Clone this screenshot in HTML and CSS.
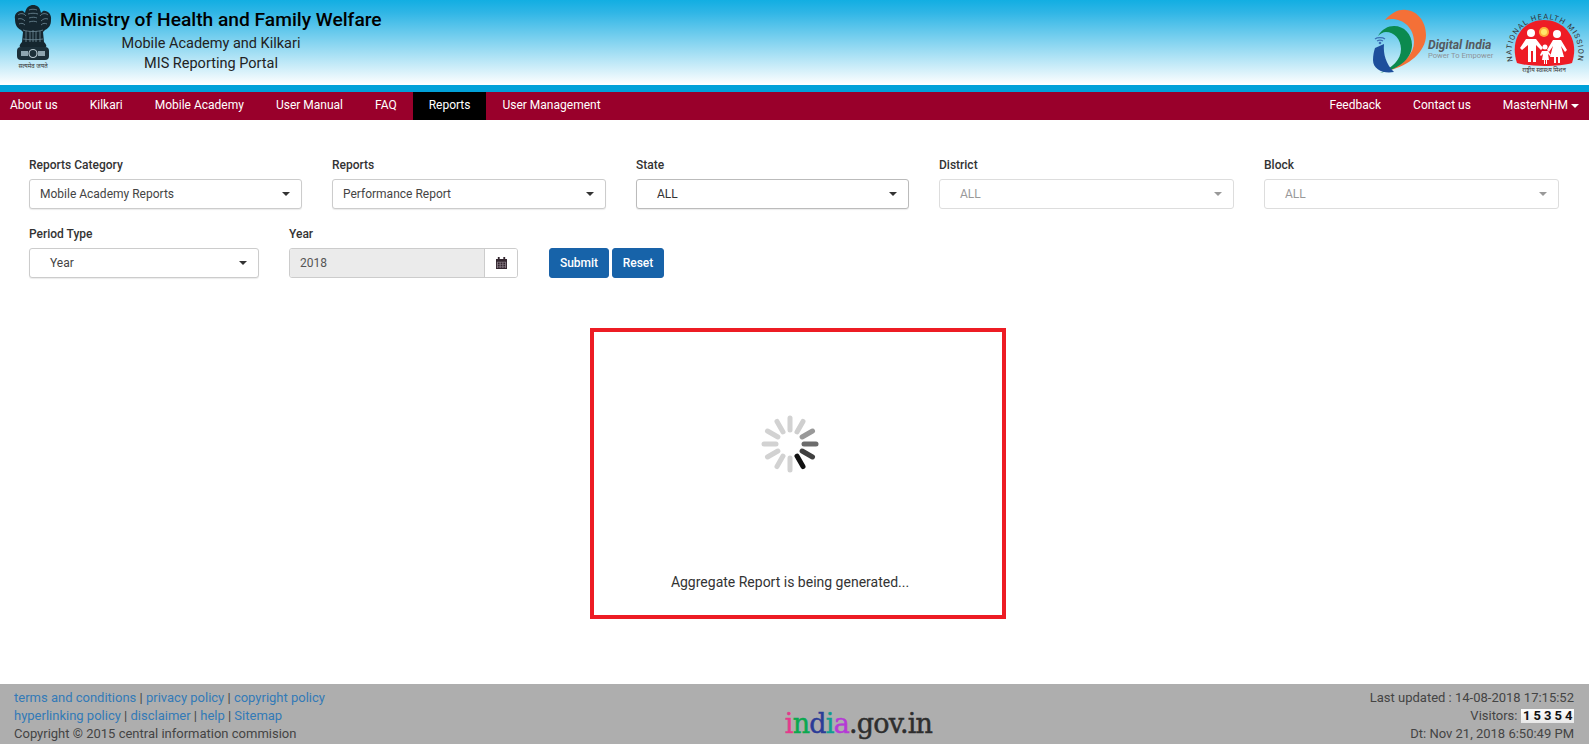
FILE: index.html
```html
<!DOCTYPE html>
<html lang="en">
<head>
<meta charset="utf-8">
<title>MIS Reporting Portal</title>
<link rel="stylesheet" href="styles.css">
</head>
<body>
<div class="page">
<header class="masthead">
  <div class="brand">
    <svg class="emblem" width="38" height="64" viewBox="0 0 38 64" aria-hidden="true">
      <path d="M1 14C0 9 4 5 9 6L11 8C12 2 16 0 19 0C23 0 26 2 27 8L29 6C33 5 38 9 37 15C37 20 35 23 31 25L29 27L30 37C32 39 33 41 32 42L6 42C5 41 6 39 8 37L9 27L7 25C3 23 1 20 1 14Z" fill="#15262f"/>
      <g fill="none" stroke="#6f8a98" stroke-width=".8">
        <path d="M4 10c2-2 6-2 8 1M4 14c3-1 5 0 7 2M5 19c2-1 4-1 6 1"/>
        <path d="M15 5c2-1 6-1 8 0M14 9c3-1 7-1 10 0M15 13c3-1 6-1 8 0M15 17c3-1 6-1 8 0"/>
        <path d="M26 11c2-3 6-3 8-1M27 16c2-2 4-3 7-2M27 20c2-2 4-2 6-1"/>
        <path d="M12 26v11M16 26v11M19 25v12M22 26v11M26 26v11"/>
        <path d="M9 25c6 2 14 2 20 0M9 34c6 1 14 1 20 0"/>
      </g>
      <rect x="3" y="42" width="32" height="13" rx="4" fill="#1c2f39"/>
      <circle cx="19" cy="48.500" r="4" fill="none" stroke="#b8c8d0" stroke-width="1.200"/>
      <path d="M7 46h7v5H7zM24 46h7v5h-7z" fill="#8ea4af"/>
      <text class="emblem-motto" x="19" y="63" text-anchor="middle">सत्यमेव जयते</text>
    </svg>
    <div class="brand-text">
      <h1 class="ministry">Ministry of Health and Family Welfare</h1>
      <p class="sub sub-one">Mobile Academy and Kilkari</p>
      <p class="sub sub-two">MIS Reporting Portal</p>
    </div>
  </div>
  <div class="logos">
    <div class="digital">
      <svg width="56" height="68" viewBox="0 0 56 68" aria-hidden="true">
        <path d="M13 12C20 4 28 1 34 2C46 3 54 14 54 27C54 44 36 58 18 62C32 55 42 46 42 34C42 18 28 8 13 12Z" fill="#f47037"/>
        <path d="M6 28C10 21 16 18 22 18C32 18 40 26 40 37C40 52 24 62 8 65C20 60 29 52 29 41C29 31 22 24 14 24C11 24 8 26 6 28Z" fill="#0b8a4f"/>
        <path d="M3 40L12 36C11 46 14 56 22 64C12 66 1 62 1 52C1 47 2 43 3 40Z" fill="#1d4f9c"/>
        <path d="M3 31a6 3 0 0 1 10 0M5 33a4 2 0 0 1 6 0" fill="none" stroke="#3b6fb5" stroke-width="1.200"/>
        <circle cx="8" cy="35" r="1.300" fill="#3b6fb5"/>
      </svg>
      <div class="digital-text">
        <span class="digital-name">Digital India</span>
        <span class="digital-tag">Power To Empower</span>
      </div>
    </div>
    <svg class="nhm" width="84" height="68" viewBox="0 0 84 68" aria-hidden="true">
      <defs><path id="arc" d="M8 53A33.400 33.400 0 1 1 72 53"/></defs>
      <text class="nhm-arc"><textPath href="#arc" startOffset="50%" text-anchor="middle">NATIONAL HEALTH MISSION</textPath></text>
      <path d="M12 54C4 30 18 11 39 11C60 11 75 30 67 54C55 58 24 58 12 54Z" fill="#ee1c25"/>
      <circle cx="39" cy="23" r="5" fill="#ffb03a"/>
      <circle cx="39" cy="23" r="3" fill="#ffe86a"/>
      <g class="fig-father">
        <circle cx="25" cy="27" r="4" fill="#fff"/>
        <path d="M20 33h10l7 9-2 2-5-5v17h-3V45h-2v11h-3V39l-6 5-2-2z" fill="#fff"/>
      </g>
      <g class="fig-mother">
        <circle cx="55" cy="27" r="4" fill="#fff"/>
        <path d="M51 33h8l6 10-2 2-4-6 3 11h-4v6h-2v-6h-2v6h-2v-6h-4l3-11-4 6-2-2z" fill="#fff"/>
      </g>
      <g class="fig-child">
        <circle cx="40" cy="41" r="2.500" fill="#fff"/>
        <path d="M37 45h6l3 4-1 1-2-2 1 6h-2v4h-1v-4h-1v4h-1v-4h-2l1-6-2 2-1-1z" fill="#fff"/>
      </g>
      <text class="nhm-foot" x="39" y="63" text-anchor="middle">राष्ट्रीय स्वास्थ्य मिशन</text>
    </svg>
  </div>
</header>
<div class="strip"></div>
<nav class="navbar">
  <ul class="nav-group">
    <li class="nav-item first">About us</li>
    <li class="nav-item">Kilkari</li>
    <li class="nav-item">Mobile Academy</li>
    <li class="nav-item">User Manual</li>
    <li class="nav-item">FAQ</li>
    <li class="nav-item active">Reports</li>
    <li class="nav-item">User Management</li>
  </ul>
  <ul class="nav-group">
    <li class="nav-item">Feedback</li>
    <li class="nav-item">Contact us</li>
    <li class="nav-item last">MasterNHM<span class="caret"></span></li>
  </ul>
</nav>
<main class="content">
  <div class="filter-row">
    <div class="field w-category"><label class="label">Reports Category</label>
      <div class="select"><span>Mobile Academy Reports</span><i class="arrow"></i></div></div>
    <div class="field w-reports"><label class="label">Reports</label>
      <div class="select"><span>Performance Report</span><i class="arrow"></i></div></div>
    <div class="field w-state"><label class="label">State</label>
      <div class="select indented strong"><span>ALL</span><i class="arrow"></i></div></div>
    <div class="field w-geo"><label class="label">District</label>
      <div class="select indented disabled"><span>ALL</span><i class="arrow"></i></div></div>
    <div class="field w-geo"><label class="label">Block</label>
      <div class="select indented disabled"><span>ALL</span><i class="arrow"></i></div></div>
  </div>
  <div class="filter-row second">
    <div class="field w-period"><label class="label">Period Type</label>
      <div class="select indented"><span>Year</span><i class="arrow"></i></div></div>
    <div class="field w-year"><label class="label">Year</label>
      <div class="date-group">
        <div class="date-value">2018</div>
        <div class="date-addon">
          <svg width="11" height="12" viewBox="0 0 12 13" aria-hidden="true"><path d="M2 0h2v2h4V0h2v2h2v11H0V2h2z" fill="#33262f"/><path d="M1 5h10v7H1z" fill="#8a7f88"/><path d="M2 6h2v1.500H2zM5 6h2v1.500H5zM8 6h2v1.500H8zM2 8.200h2v1.500H2zM5 8.200h2v1.500H5zM8 8.200h2v1.500H8zM2 10.400h2v1.300H2zM5 10.400h2v1.300H5zM8 10.400h2v1.300H8z" fill="#33262f"/></svg>
        </div>
      </div></div>
    <div class="actions">
      <button class="btn btn-submit" type="button">Submit</button>
      <button class="btn btn-reset" type="button">Reset</button>
    </div>
  </div>
  <section class="loader">
    <svg class="spinner" width="60" height="60" viewBox="-30 -30 60 60" aria-hidden="true">
      <g stroke-width="5" stroke-linecap="round">
        <line y1="-14" y2="-26" stroke="#d2d2d2"/>
        <line y1="-14" y2="-26" stroke="#cfcfcf" transform="rotate(30)"/>
        <line y1="-14" y2="-26" stroke="#999" transform="rotate(60)"/>
        <line y1="-14" y2="-26" stroke="#6c6c6c" transform="rotate(90)"/>
        <line y1="-14" y2="-26" stroke="#404040" transform="rotate(120)"/>
        <line y1="-14" y2="-26" stroke="#111" transform="rotate(150)"/>
        <line y1="-14" y2="-26" stroke="#d2d2d2" transform="rotate(180)"/>
        <line y1="-14" y2="-26" stroke="#d2d2d2" transform="rotate(210)"/>
        <line y1="-14" y2="-26" stroke="#d2d2d2" transform="rotate(240)"/>
        <line y1="-14" y2="-26" stroke="#d2d2d2" transform="rotate(270)"/>
        <line y1="-14" y2="-26" stroke="#d2d2d2" transform="rotate(300)"/>
        <line y1="-14" y2="-26" stroke="#d2d2d2" transform="rotate(330)"/>
      </g>
    </svg>
    <p class="loader-text">Aggregate Report is being generated...</p>
  </section>
</main>
<footer class="footer">
  <div class="foot-left">
    <div><a class="link">terms and conditions</a> | <a class="link">privacy policy</a> | <a class="link">copyright policy</a></div>
    <div><a class="link">hyperlinking policy</a> | <a class="link">disclaimer</a> | <a class="link">help</a> | <a class="link">Sitemap</a></div>
    <div>Copyright © 2015 central information commision</div>
  </div>
  <div class="india-logo"><span class="c-i">i</span><span class="c-n">n</span><span class="c-d">d</span><span class="c-i2">i</span><span class="c-a">a</span><span class="c-rest">.gov.in</span></div>
  <div class="foot-right">
    <div>Last updated : 14-08-2018 17:15:52</div>
    <div class="visitors">Visitors: <span class="counter"><b>1</b><b>5</b><b>3</b><b>5</b><b>4</b></span></div>
    <div>Dt: Nov 21, 2018 6:50:49 PM</div>
  </div>
</footer>
</div>
</body>
</html>
```

FILE: styles.css
```css
* { box-sizing: border-box; }
html, body { margin: 0; padding: 0; }
body { font-family: Roboto, "Liberation Sans", sans-serif; font-size: 13px; color: #333; background: #fff; }
.page { width: 1589px; height: 744px; display: flex; flex-direction: column; overflow: hidden; }

.masthead { height: 85px; display: flex; justify-content: space-between; background: linear-gradient(#12aee2 0%, #30b6e6 15%, #ffffff 100%); }
.brand { display: flex; padding-left: 14px; }
.emblem { margin-top: 5px; }
.emblem-motto { font-family: "Noto Sans", sans-serif; font-size: 6px; fill: #333; }
.brand-text { margin-left: 8px; width: 330px; }
.ministry { margin: 8px 0 0; font-size: 19.2px; line-height: 24px; font-weight: 500; color: #000; white-space: nowrap; }
.sub { margin: 0; font-size: 14.5px; line-height: 20px; color: #222; text-align: center; width: 302px; }
.sub-one { margin-top: 2px; }
.logos { display: flex; align-items: flex-start; }
.digital { display: flex; align-items: flex-start; margin-top: 8px; }
.digital-text { display: flex; flex-direction: column; margin-top: 32px; width: 65px; }
.digital-name { font-size: 12.2px; line-height: 11px; font-weight: 700; font-style: italic; color: #555a60; white-space: nowrap; }
.digital-tag { font-size: 7.6px; line-height: 9px; color: #8d9398; white-space: nowrap; }
.nhm { margin-left: 12px; margin-top: 9px; }
.nhm-arc { font-family: Roboto, sans-serif; font-size: 7.500px; letter-spacing: 1.1px; fill: #333; }
.nhm-foot { font-family: "Noto Sans", sans-serif; font-size: 6px; fill: #333; }
.fig-father { transform: translate(1px, -3px); }
.fig-mother { transform: translate(-3px, -2px); }
.fig-child { transform: translate(0, -3px); }

.strip { height: 7px; background: #00a1d9; }
.navbar { height: 28px; display: flex; justify-content: space-between; background: #99002b; color: #fff; font-size: 12px; }
.nav-group { display: flex; margin: 0; padding: 0; list-style: none; }
.nav-item { padding: 0 16px; line-height: 26px; height: 28px; white-space: nowrap; }
.nav-item.first { padding-left: 10px; }
.nav-item.last { padding-right: 10px; }
.nav-item.active { background: #000; }
.caret { display: inline-block; margin-left: 3px; vertical-align: middle; border-top: 4px solid #fff; border-left: 4px solid transparent; border-right: 4px solid transparent; }

.content { flex: 1; padding: 38px 30px 0 29px; }
.filter-row { display: flex; }
.filter-row.second { margin-top: 18px; }
.field { display: flex; flex-direction: column; }
.w-category { width: 273px; margin-right: 30px; }
.w-reports { width: 274px; margin-right: 30px; }
.w-state { width: 273px; margin-right: 30px; }
.w-geo { width: 295px; margin-right: 30px; }
.w-geo:last-child { margin-right: 0; }
.w-period { width: 230px; margin-right: 30px; }
.w-year { width: 229px; margin-right: 31px; }
.label { font-size: 12px; line-height: 14px; font-weight: 500; color: #333; margin-bottom: 7px; }
.select { height: 30px; display: flex; align-items: center; justify-content: space-between; padding: 0 11px 0 10px; border: 1px solid #ccc; border-radius: 3px; background: #fff; font-size: 12px; color: #444; box-shadow: 0 1px 1px rgba(0,0,0,.08); }
.select.indented { padding-left: 20px; }
.select.strong { border-color: #bbb; color: #333; }
.select.disabled { border-color: #ddd; color: #999; box-shadow: none; }
.arrow { width: 0; height: 0; border-top: 4px solid #333; border-left: 4px solid transparent; border-right: 4px solid transparent; }
.select.disabled .arrow { border-top-color: #999; }
.date-group { height: 30px; display: flex; border: 1px solid #ccc; border-radius: 3px; overflow: hidden; }
.date-value { width: 195px; background: #ebebeb; border-right: 1px solid #ccc; padding-left: 10px; line-height: 28px; font-size: 12px; color: #555; }
.date-addon { flex: 1; display: flex; align-items: center; justify-content: center; background: #fff; }
.actions { display: flex; gap: 3px; align-self: flex-end; }
.btn { height: 30px; border: 1px solid #1a62a8; border-radius: 3px; background: #1763a9; color: #fff; font: 500 12px Roboto, sans-serif; padding: 0; }
.btn-submit { width: 60px; }
.btn-reset { width: 52px; }

.loader { width: 416px; height: 291px; margin: 50px 0 0 561px; padding-right: 16px; border: 4px solid #ed1c24; display: flex; flex-direction: column; align-items: center; }
.spinner { margin-top: 82px; }
.loader-text { margin: 99px 0 0; font-size: 14px; line-height: 18px; color: #333; }

.footer { height: 60px; background: #aeaeae; display: flex; justify-content: space-between; padding: 5px 14px 0; font-size: 13px; line-height: 18px; color: #444; }
.link { color: #337ab7; }
.foot-left { width: 564px; }
.foot-right { width: 436px; text-align: right; padding-right: 1px; }
.visitors { display: flex; justify-content: flex-end; align-items: center; gap: 4px; }
.counter { display: inline-flex; background: linear-gradient(#fff, #e8e8e8); height: 14px; }
.counter b { width: 10.500px; text-align: center; font-size: 13px; line-height: 14px; color: #111; font-weight: 700; }
.india-logo { font-family: "DejaVu Serif", "Liberation Serif", serif; font-size: 27px; line-height: 32px; letter-spacing: -.8px; margin-top: 19px; white-space: nowrap; -webkit-text-stroke: .5px currentColor; }
.c-i { color: #e5398c; }
.c-n { color: #0aa84f; }
.c-d { color: #2b3c97; }
.c-i2 { color: #0f9d8f; }
.c-a { color: #b53ad6; }
.c-rest { color: #2e2e2e; }
```
